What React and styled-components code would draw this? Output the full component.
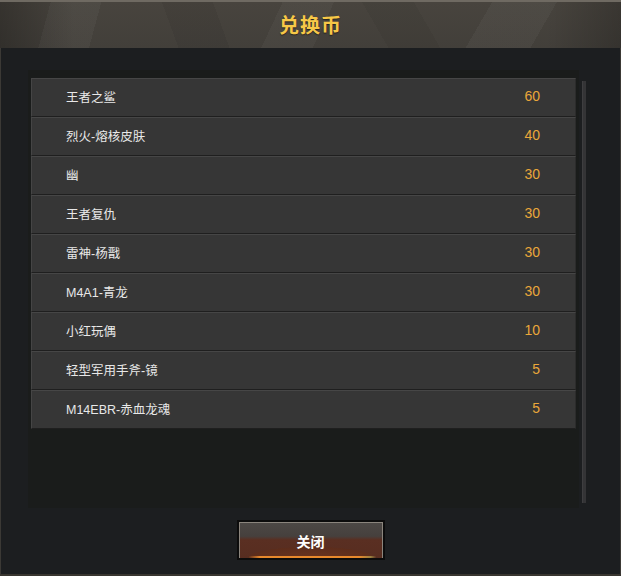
import React from "react";
import styled, { createGlobalStyle } from "styled-components";

const GlobalStyle = createGlobalStyle`
  html, body { margin: 0; padding: 0; background: #1c1e20; }
  * { box-sizing: border-box; }
`;

const Window = styled.div`
  width: 621px;
  height: 576px;
  display: flex;
  flex-direction: column;
  font-family: "Liberation Sans", "Noto Sans CJK SC", sans-serif;
  background: #1c1e20;
`;

const Header = styled.div`
  height: 48px;
  flex: none;
  display: flex;
  align-items: center;
  justify-content: center;
  padding-bottom: 2px;
  border-top: 2px solid #6f6a62;
  background:
    linear-gradient(90deg, rgba(0,0,0,0.25) 0%, transparent 12%, transparent 88%, rgba(0,0,0,0.2) 100%),
    linear-gradient(105deg, transparent 8%, rgba(255,255,255,0.035) 8% 16%, transparent 16%),
    linear-gradient(70deg, transparent 28%, rgba(0,0,0,0.06) 28% 36%, transparent 36%),
    linear-gradient(115deg, transparent 44%, rgba(255,255,255,0.03) 44% 52%, transparent 52%),
    linear-gradient(60deg, transparent 60%, rgba(0,0,0,0.05) 60% 68%, transparent 68%),
    linear-gradient(120deg, transparent 76%, rgba(255,255,255,0.035) 76% 86%, transparent 86%),
    linear-gradient(180deg, #48443e 0%, #423f3a 100%);
`;

const Title = styled.h1`
  margin: 0;
  font-family: "Noto Sans CJK SC", sans-serif;
  font-size: 20px;
  font-weight: 700;
  color: #f7c847;
  letter-spacing: 1px;
  text-shadow: 0 1px 1px rgba(0,0,0,0.5);
`;

const Body = styled.div`
  flex: 1;
  display: flex;
  flex-direction: column;
  border-left: 1px solid #3b3935;
  border-right: 1px solid #3b3935;
  border-bottom: 2px solid #38352f;
`;

const Content = styled.div`
  height: 438px;
  margin: 22px 34px 0 27px;
  display: flex;
  gap: 3px;
`;

const Panel = styled.div`
  flex: 1;
  background: #1a1c1b;
  padding: 8px 3px;
`;

const Scrollbar = styled.div`
  width: 4px;
  margin: 11px 0 5px;
  background: #343436;
  border-left: 1px solid #3e3e40;
`;

const List = styled.ul`
  list-style: none;
  margin: 0;
  padding: 0;
`;

const Row = styled.li`
  height: 39px;
  display: flex;
  align-items: center;
  justify-content: space-between;
  background: #363636;
  border-top: 1px solid #464646;
  border-left: 1px solid #454545;
  border-right: 1px solid #2c2c2c;
  border-bottom: 1px solid #1f1f1f;
  padding: 0 35px 3px 34px;
`;

const Name = styled.span`
  font-size: 12.5px;
  color: #e8e8e8;
`;

const Price = styled.span`
  font-size: 14px;
  color: #eaa73a;
`;

const Footer = styled.div`
  display: flex;
  justify-content: center;
  padding-top: 12px;
`;

const CloseButton = styled.button`
  width: 148px;
  height: 40px;
  padding: 0;
  border: 2px solid #0c0c0c;
  outline: none;
  background: #0c0c0c;
  cursor: pointer;
  display: flex;
`;

const ButtonFace = styled.span`
  flex: 1;
  display: flex;
  align-items: center;
  justify-content: center;
  border: 1px solid #8b857d;
  border-bottom: none;
  font-family: "Noto Sans CJK SC", sans-serif;
  font-size: 14px;
  font-weight: 700;
  color: #ffffff;
  background:
    linear-gradient(90deg, transparent 6%, #e8892c 14% 84%, #9a8040 92%, transparent 96%) bottom / 100% 2px no-repeat,
    radial-gradient(ellipse 62% 45% at 50% 100%, #693420 0%, #5c2d1c 70%, transparent 72%),
    linear-gradient(180deg, #4c4845 0%, #46403d 38%, #5a2f22 48%, #572d20 100%);
`;

const items = [
  ["王者之鲨", 60],
  ["烈火-熔核皮肤", 40],
  ["幽", 30],
  ["王者复仇", 30],
  ["雷神-杨戬", 30],
  ["M4A1-青龙", 30],
  ["小红玩偶", 10],
  ["轻型军用手斧-镜", 5],
  ["M14EBR-赤血龙魂", 5],
];

export default function App() {
  return (
    <>
      <GlobalStyle />
      <Window>
        <Header>
          <Title>兑换币</Title>
        </Header>
        <Body>
          <Content>
            <Panel>
              <List>
                {items.map(([name, price]) => (
                  <Row key={name}>
                    <Name>{name}</Name>
                    <Price>{price}</Price>
                  </Row>
                ))}
              </List>
            </Panel>
            <Scrollbar />
          </Content>
          <Footer>
            <CloseButton>
              <ButtonFace>关闭</ButtonFace>
            </CloseButton>
          </Footer>
        </Body>
      </Window>
    </>
  );
}
